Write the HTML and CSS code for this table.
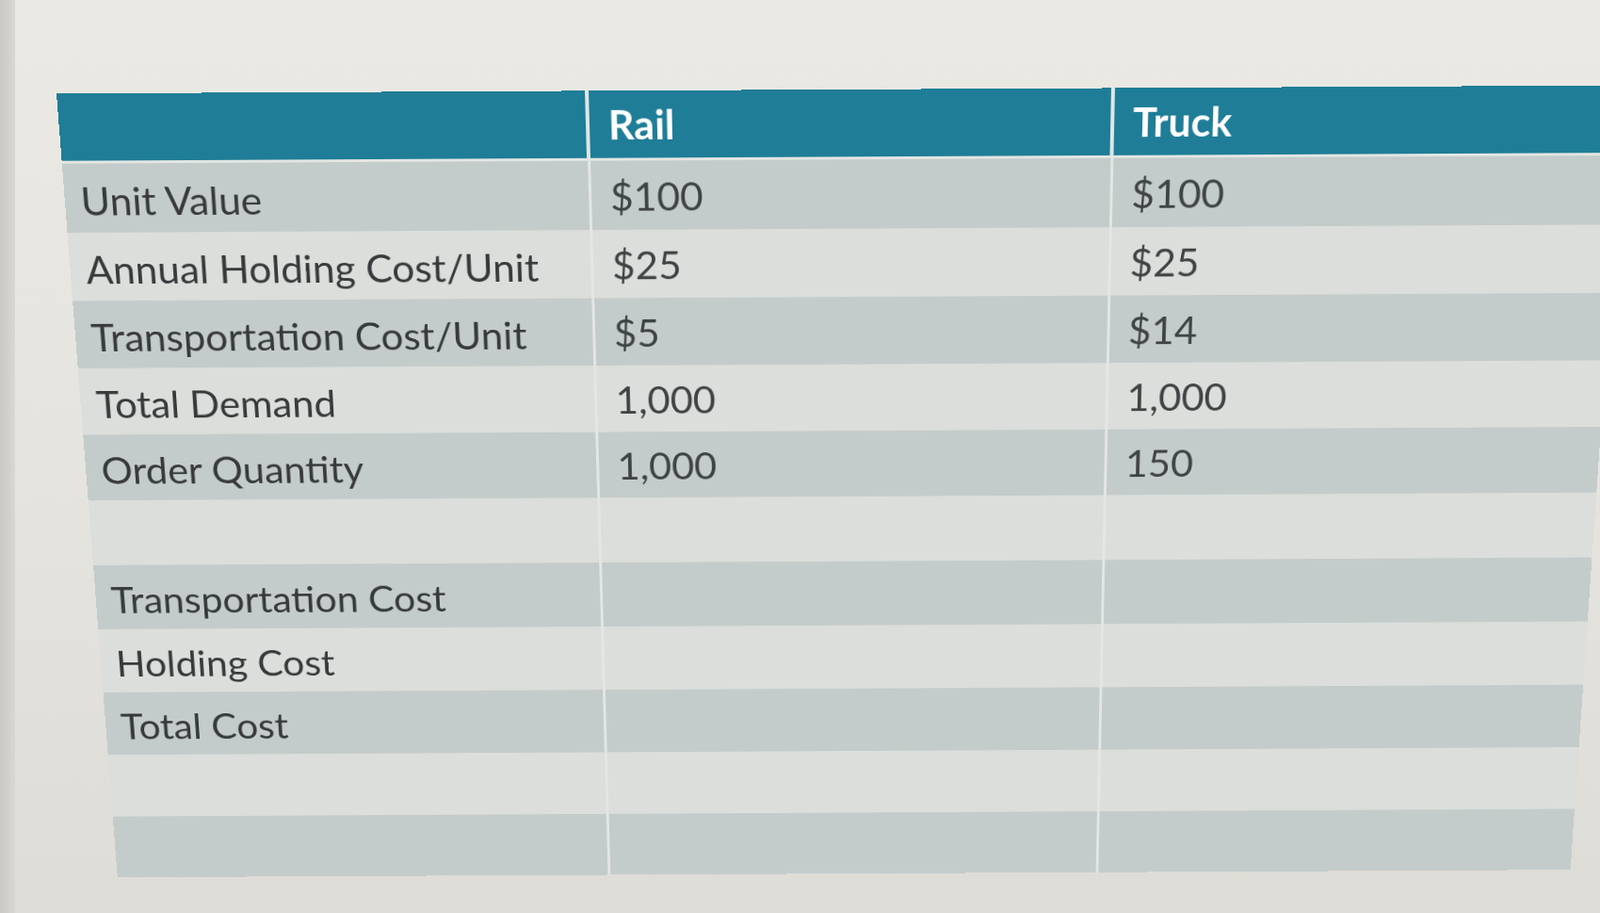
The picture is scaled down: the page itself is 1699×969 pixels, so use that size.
FILE: index.html
```html
<!DOCTYPE html>
<html lang="en">
<head>
<meta charset="utf-8">
<title>Rail vs Truck</title>
<link rel="stylesheet" href="styles.css">
</head>
<body>
<div class="screen">
  <div class="bezel"></div>
  <div class="sheet">
    <table class="cost-table">
      <thead>
        <tr class="head">
          <th class="c0"></th>
          <th class="c1">Rail</th>
          <th class="c2">Truck</th>
        </tr>
      </thead>
      <tbody>
        <tr class="dark"><td class="c0">Unit Value</td><td class="c1 val">$100</td><td class="c2 val">$100</td></tr>
        <tr class="light"><td class="c0">Annual Holding Cost/Unit</td><td class="c1 val">$25</td><td class="c2 val">$25</td></tr>
        <tr class="dark"><td class="c0">Transportation Cost/Unit</td><td class="c1 val">$5</td><td class="c2 val">$14</td></tr>
        <tr class="light"><td class="c0">Total Demand</td><td class="c1 val">1,000</td><td class="c2 val">1,000</td></tr>
        <tr class="dark"><td class="c0">Order Quantity</td><td class="c1 val">1,000</td><td class="c2 val">150</td></tr>
        <tr class="light"><td class="c0"></td><td class="c1"></td><td class="c2"></td></tr>
        <tr class="dark"><td class="c0">Transportation Cost</td><td class="c1"></td><td class="c2"></td></tr>
        <tr class="light"><td class="c0">Holding Cost</td><td class="c1"></td><td class="c2"></td></tr>
        <tr class="dark"><td class="c0">Total Cost</td><td class="c1"></td><td class="c2"></td></tr>
        <tr class="light"><td class="c0"></td><td class="c1"></td><td class="c2"></td></tr>
        <tr class="dark"><td class="c0"></td><td class="c1"></td><td class="c2"></td></tr>
      </tbody>
    </table>
  </div>
</div>
</body>
</html>
```
FILE: styles.css
```css
html, body {
  margin: 0;
  padding: 0;
  width: 1699px;
  height: 969px;
  overflow: hidden;
  background: #e4e2dc;
}

.screen {
  position: relative;
  width: 1699px;
  height: 969px;
  background: linear-gradient(180deg, #ebe9e4 0%, #e6e4df 50%, #dedcd7 100%);
  overflow: hidden;
}

.bezel {
  position: absolute;
  left: 0;
  top: 0;
  width: 16px;
  height: 969px;
  background: linear-gradient(90deg, #cbc9c3 0%, #d9d7d1 100%);
}

.sheet {
  padding: 95px 0 0 60px;
}

.cost-table {
  border-collapse: separate;
  border-spacing: 0;
  table-layout: fixed;
  width: 1665px;
  font-family: Lato, "Open Sans", "Liberation Sans", sans-serif;
  font-size: 43px;
  color: #37393a;
  transform-origin: 824px 0;
  transform: rotate(-0.3deg) perspective(2000px) rotateX(-10deg);
}

.cost-table th,
.cost-table td {
  height: 76px;
  padding: 4px 0 0 17px;
  text-align: left;
  vertical-align: middle;
  box-sizing: border-box;
  white-space: nowrap;
}

.c0 { width: 565px; }
.c1 { width: 559px; }
.c2 { width: 541px; }

.c0, .c1 {
  border-right: 3px solid #e3e6e3;
}

.cost-table .c1,
.cost-table .c2 {
  padding-left: 20px;
}

.head th {
  background: #1f7d97;
  color: #ffffff;
  font-weight: 700;
  padding-top: 0;
  border-bottom: 3px solid #e3e6e3;
}

.head .c0,
.head .c1 {
  border-right: 4px solid #dfe6e6;
}

.dark td {
  background: #c4cccb;
}

.light td {
  background: #dbdeda;
}

.cost-table .val {
  padding-top: 0;
  color: #404344;
}
```
